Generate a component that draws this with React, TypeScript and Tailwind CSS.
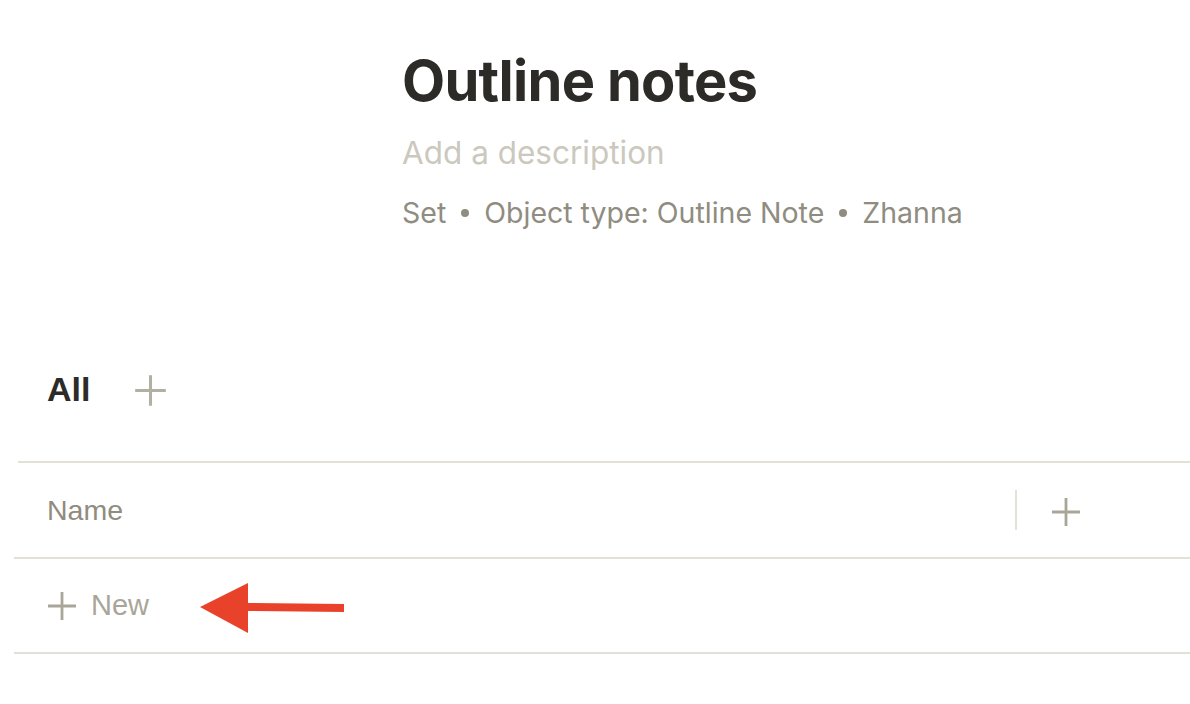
import React from 'react';

const Plus = ({ size = 32, className = '' }: { size?: number; className?: string }) => (
  <svg width={size} height={size} viewBox="0 0 32 32" className={className} fill="none">
    <path d="M16 2v28M2 16h28" stroke="currentColor" strokeWidth="2.8" />
  </svg>
);

export default function App() {
  return (
    <div className="min-h-[704px] w-[1190px] bg-white overflow-hidden relative">
      {/* Header */}
      <div className="pl-[402px] pt-[45px] font-['Inter',sans-serif]">
        <h1 className="text-[56px] leading-[72px] font-bold text-[#2c2b27] tracking-[-0.7px]">Outline notes</h1>
        <div className="mt-[14px] text-[31.5px] leading-[44px] text-[#cbc8bd]">Add a description</div>
        <div className="mt-[20px] flex items-center text-[28.5px] leading-[36px] text-[#8f8c80]">
          <span>Set</span>
          <span className="mx-[15px] w-[8px] h-[8px] rounded-full bg-[#8f8c80]" />
          <span>Object type: Outline Note</span>
          <span className="mx-[15px] w-[8px] h-[8px] rounded-full bg-[#8f8c80]" />
          <span>Zhanna</span>
        </div>
      </div>

      {/* Views */}
      <div className="mt-[138px] pl-[47px] flex items-center gap-[43px] font-['Liberation_Sans',sans-serif]">
        <span className="text-[34px] leading-[40px] font-bold text-[#2c2b27]">All</span>
        <Plus size={35} className="text-[#b2afa3] mt-[2px]" />
      </div>

      {/* Table */}
      <div className="mt-[52px] font-['Liberation_Sans',sans-serif]">
        <div className="ml-[18px] border-t-2 border-[#e3e0d6]" />
        <div className="ml-[14px] h-[96px] flex items-center border-b-2 border-[#e3e0d6]">
          <span className="pl-[33px] flex-1 text-[28.5px] text-[#8f8c80]">Name</span>
          <span className="w-[2px] h-[40px] bg-[#e3e0d6]" />
          <div className="w-[173px] pl-[33px] flex items-center">
            <Plus size={32} className="text-[#a9a699] mt-[3px]" />
          </div>
        </div>
        <div className="ml-[14px] h-[95px] flex items-center border-b-2 border-[#e3e0d6]">
          <div className="pl-[32px] flex items-center gap-[13px] text-[29px] text-[#a9a699]">
            <Plus size={32} className="mt-[1px]" />
            <span>New</span>
          </div>
        </div>
      </div>

      {/* Annotation arrow */}
      <svg className="absolute left-[198px] top-[582px]" width="150" height="52" viewBox="0 0 150 52">
        <polygon points="2,25 50,1 50,21 146,22 146,30 50,29 50,51" fill="#e8432a" />
      </svg>
    </div>
  );
}
